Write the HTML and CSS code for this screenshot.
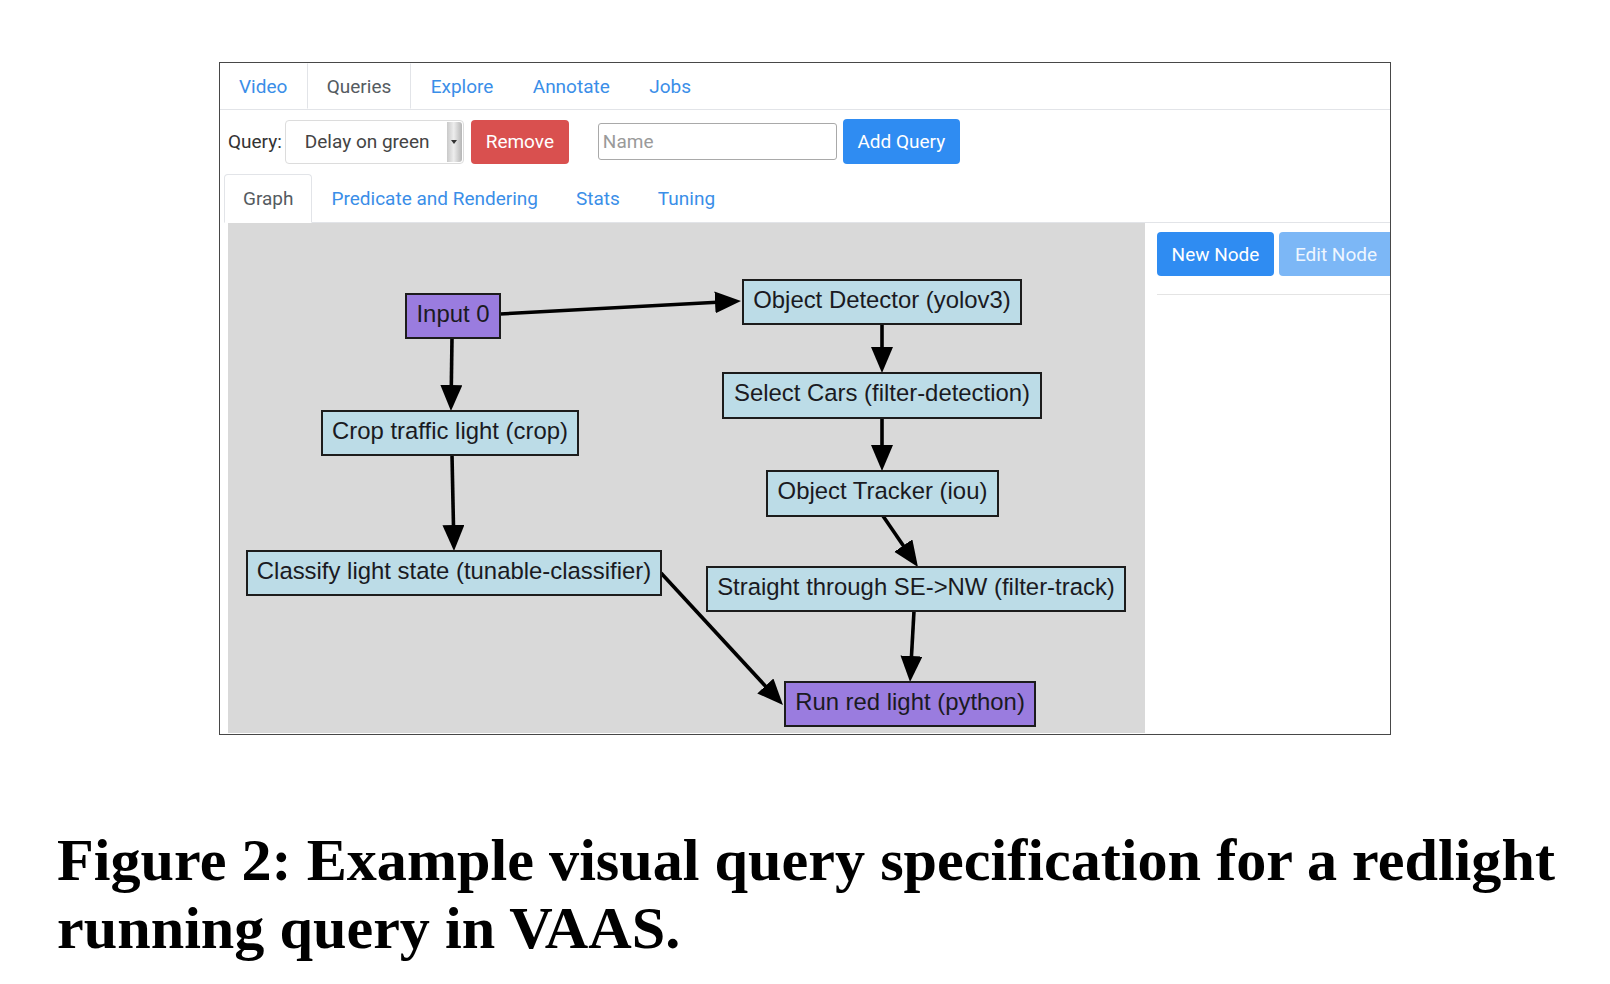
FILE: index.html
```html
<!DOCTYPE html>
<html lang="en">
<head>
<meta charset="utf-8">
<title>VAAS query graph</title>
<link rel="stylesheet" href="styles.css">
</head>
<body>
<div class="page">
  <div class="app">
    <nav class="tabs top-tabs">
      <a class="tab">Video</a>
      <a class="tab active">Queries</a>
      <a class="tab">Explore</a>
      <a class="tab">Annotate</a>
      <a class="tab">Jobs</a>
    </nav>
    <div class="query-row">
      <label class="query-label">Query:</label>
      <div class="select"><span class="select-text">Delay on green</span><span class="select-arrow"><span class="caret"></span></span></div>
      <button class="btn btn-danger">Remove</button>
      <input class="name-input" type="text" placeholder="Name">
      <button class="btn btn-primary">Add Query</button>
    </div>
    <nav class="tabs sub-tabs">
      <a class="tab active">Graph</a>
      <a class="tab">Predicate and Rendering</a>
      <a class="tab">Stats</a>
      <a class="tab">Tuning</a>
    </nav>
    <div class="workspace">
      <div class="graph">
        <svg class="graph-svg" width="917" height="510" viewBox="0 0 917 510">
          <defs>
            <marker id="ah" markerUnits="userSpaceOnUse" markerWidth="27" markerHeight="23" refX="16" refY="11" orient="auto">
              <path d="M0,0 L26,11 L0,22 Z" fill="#000"/>
            </marker>
          </defs>
          <g class="edges" stroke="#000" stroke-width="3.6" fill="none" marker-end="url(#ah)">
            <line x1="272" y1="91" x2="503" y2="78.5"/>
            <line x1="224" y1="115" x2="223.1" y2="178"/>
            <line x1="224" y1="232" x2="225.8" y2="318"/>
            <line x1="433" y1="350" x2="548.2" y2="474.7"/>
            <line x1="654" y1="101" x2="654" y2="140"/>
            <line x1="654" y1="195" x2="654" y2="238"/>
            <line x1="655" y1="293" x2="684.3" y2="335.8"/>
            <line x1="686" y1="388" x2="682.6" y2="449"/>
          </g>
          <g class="nodes" stroke="#1c1c1c" stroke-width="2">
            <rect class="n-purple" x="178" y="71" width="94" height="44"/>
            <rect class="n-blue" x="515" y="57" width="278" height="44"/>
            <rect class="n-blue" x="94" y="188" width="256" height="44"/>
            <rect class="n-blue" x="495" y="150" width="318" height="45"/>
            <rect class="n-blue" x="539" y="248" width="231" height="45"/>
            <rect class="n-blue" x="19" y="328" width="414" height="44"/>
            <rect class="n-blue" x="479" y="344" width="418" height="44"/>
            <rect class="n-purple" x="557" y="459" width="250" height="44"/>
          </g>
          <g class="labels" text-anchor="middle">
            <text x="225" y="99">Input 0</text>
            <text x="654" y="85">Object Detector (yolov3)</text>
            <text x="222" y="216">Crop traffic light (crop)</text>
            <text x="654" y="178">Select Cars (filter-detection)</text>
            <text x="654.5" y="276">Object Tracker (iou)</text>
            <text x="226" y="356">Classify light state (tunable-classifier)</text>
            <text x="688" y="372">Straight through SE-&gt;NW (filter-track)</text>
            <text x="682" y="487">Run red light (python)</text>
          </g>
        </svg>
      </div>
      <div class="side">
        <div class="side-buttons">
          <button class="btn btn-primary node-btn">New Node</button>
          <button class="btn btn-primary node-btn disabled">Edit Node</button>
        </div>
        <div class="side-rule"></div>
      </div>
    </div>
  </div>
  <p class="caption">Figure 2: Example visual query specification for a redlight running query in VAAS.</p>
</div>
</body>
</html>
```

FILE: styles.css
```css
html, body {
  margin: 0;
  padding: 0;
  background: #ffffff;
}

.page {
  padding: 62px 0 0 57px;
}

.app {
  box-sizing: border-box;
  width: 1172px;
  height: 673px;
  margin-left: 162px;
  border: 1px solid #474747;
  overflow: hidden;
  display: flex;
  flex-direction: column;
  font-family: Roboto, "Liberation Sans", sans-serif;
  font-size: 19px;
}

.tabs {
  display: flex;
  border-bottom: 1px solid #e2e4e8;
}

.tab {
  box-sizing: border-box;
  display: block;
  padding: 0 18px;
  border: 1px solid transparent;
  border-radius: 4px 4px 0 0;
  margin-bottom: -1px;
  color: #3a8ee8;
  white-space: nowrap;
}

.tab.active {
  color: #555b61;
  background: #ffffff;
  border-color: #e2e4e8 #e2e4e8 #ffffff;
}

.top-tabs {
  height: 46px;
}

.top-tabs .tab {
  height: 46px;
  line-height: 46px;
  padding: 0 18.7px;
}

.top-tabs .tab:first-child {
  padding-left: 18px;
}

.top-tabs .tab.active {
  border-top-color: transparent;
  border-radius: 0;
}

.query-row {
  display: flex;
  align-items: center;
  height: 45px;
  margin-top: 9px;
  padding-left: 8px;
}

.query-label {
  color: #333;
  margin-right: 3px;
}

.select {
  box-sizing: border-box;
  display: flex;
  align-items: stretch;
  width: 179px;
  height: 44px;
  border: 1px solid #dcdcdc;
  border-radius: 4px;
  background: #fff;
  color: #444;
}

.select-text {
  flex: 1;
  padding-left: 19px;
  line-height: 42px;
  white-space: nowrap;
}

.select-arrow {
  width: 15px;
  margin: 1px 1px 1px 0;
  border-radius: 0 3px 3px 0;
  background: linear-gradient(to right, #c9c9c9, #ededed 45%, #b5b5b5);
  display: flex;
  align-items: center;
  justify-content: center;
}

.caret {
  width: 0;
  height: 0;
  border-left: 3px solid transparent;
  border-right: 3px solid transparent;
  border-top: 4px solid #333;
}

.btn {
  box-sizing: border-box;
  height: 44px;
  border: none;
  border-radius: 4px;
  font-family: Roboto, "Liberation Sans", sans-serif;
  font-size: 19px;
  color: #fff;
  padding: 0 14px;
  white-space: nowrap;
}

.btn-danger {
  background: #d9504f;
  margin-left: 7px;
  width: 98px;
}

.btn-primary {
  background: #2f8cf2;
}

.query-row .btn-primary {
  width: 117px;
  height: 45px;
  margin-left: 6px;
}

.name-input {
  box-sizing: border-box;
  width: 239px;
  height: 37px;
  margin-left: 29px;
  border: 1px solid #a9a9a9;
  border-radius: 3px;
  padding: 0 4px;
  font-family: Roboto, "Liberation Sans", sans-serif;
  font-size: 19px;
  color: #333;
}

.name-input::placeholder {
  color: #9a9a9a;
}

.sub-tabs {
  margin-top: 10px;
  margin-left: 4px;
  height: 48px;
}

.sub-tabs .tab {
  height: 49px;
  line-height: 48px;
}

.workspace {
  flex: 1;
  display: flex;
  min-height: 0;
}

.graph {
  width: 917px;
  margin-left: 8px;
  margin-bottom: 1px;
  background: #d9d9d9;
  flex-shrink: 0;
}

.graph-svg {
  display: block;
}

.n-blue {
  fill: #bcdce7;
}

.n-purple {
  fill: #9a7cdf;
}

.labels text {
  font-family: "Liberation Sans", Arial, sans-serif;
  font-size: 23.9px;
  fill: #1a1a22;
}

.side {
  flex: 1;
  overflow: hidden;
  padding-top: 9px;
}

.side-buttons {
  display: flex;
  margin-left: 12px;
}

.node-btn {
  flex-shrink: 0;
  width: 117px;
  height: 44px;
  margin-right: 5px;
}

.node-btn.disabled {
  width: 114px;
  background: #7cb7f6;
  color: #eef6ff;
}

.side-rule {
  margin: 18px 0 0 12px;
  border-top: 1px solid #e4e4e4;
}

.caption {
  width: 1530px;
  margin: 91px 0 0 0;
  font-family: "Liberation Serif", "Times New Roman", serif;
  font-weight: bold;
  font-size: 60.2px;
  line-height: 68px;
  color: #000;
}
```
